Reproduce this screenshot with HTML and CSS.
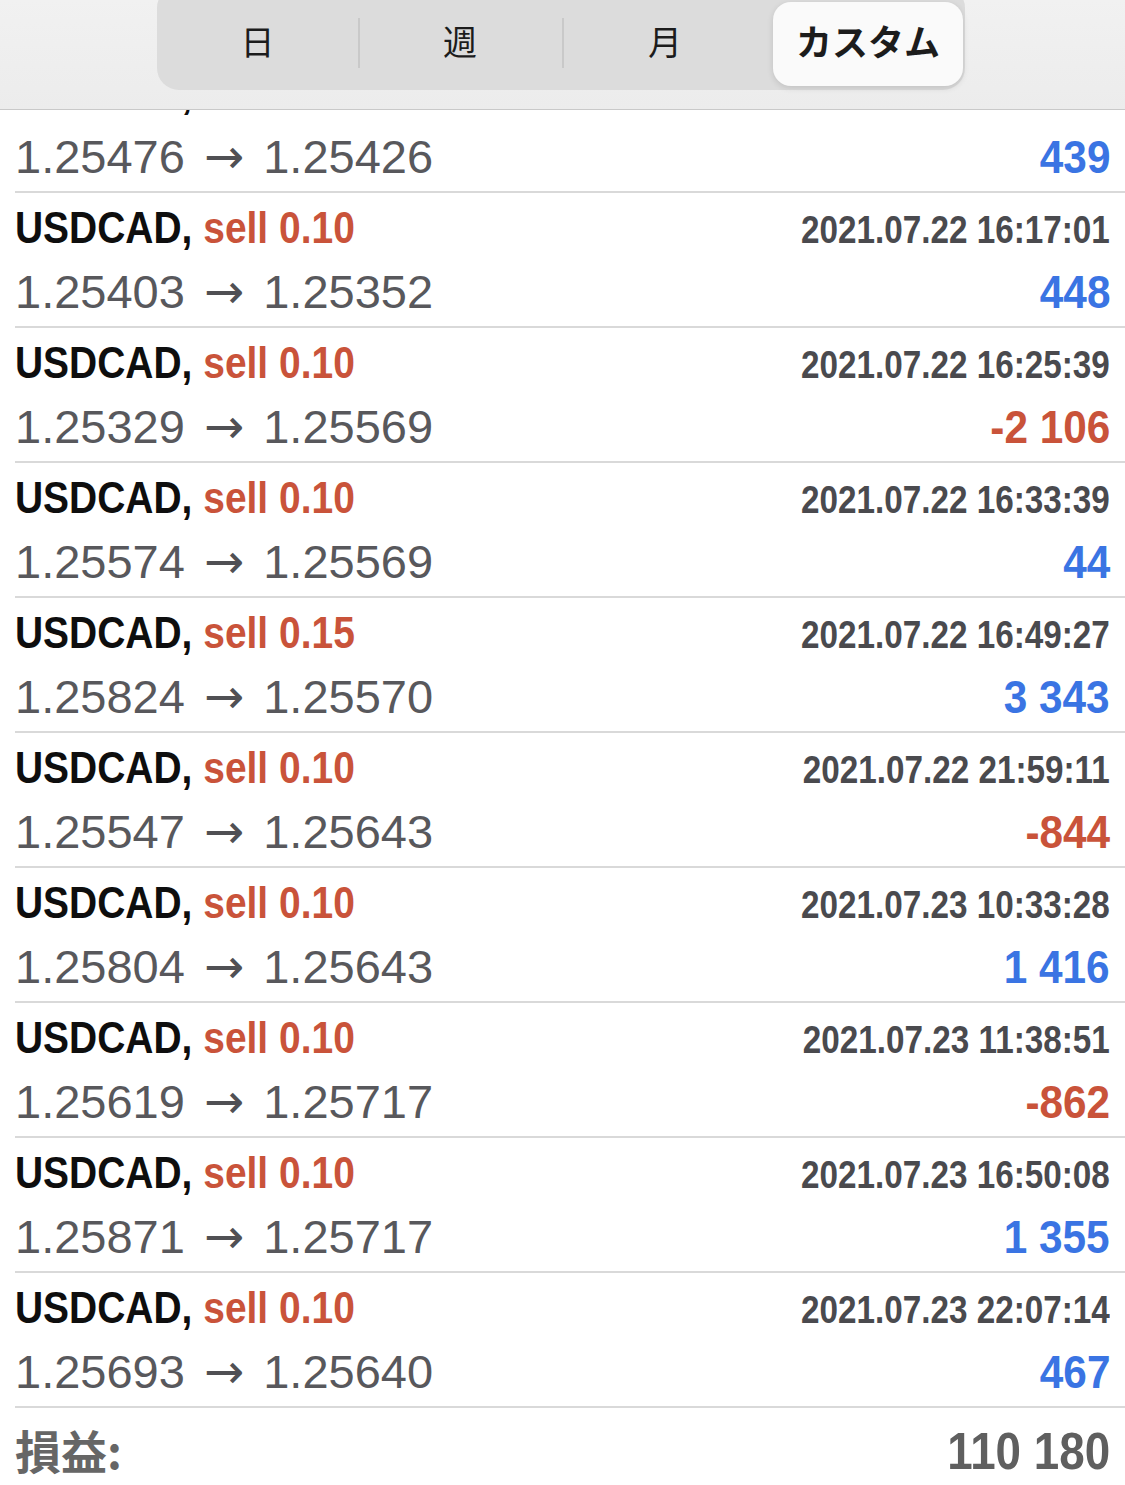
FILE: index.html
```html
<!DOCTYPE html>
<html lang="ja">
<head>
<meta charset="utf-8">
<title>履歴</title>
<link rel="stylesheet" href="styles.css">
</head>
<body>
<header class="topbar">
  <div class="segmented">
    <div class="seg">日</div>
    <div class="seg sep">週</div>
    <div class="seg sep">月</div>
    <div class="seg active">カスタム</div>
  </div>
</header>
<main class="list">
  <div class="row">
    <div class="line1"><span class="title">USDCAD, <span class="sell">sell 0.10</span></span></div>
    <div class="line2"><span class="price">1.25476 <span class="arrow">→</span> 1.25426</span><span class="profit pos">439</span></div>
  </div>
  <div class="row">
    <div class="line1"><span class="title">USDCAD, <span class="sell">sell 0.10</span></span><span class="date">2021.07.22 16:17:01</span></div>
    <div class="line2"><span class="price">1.25403 <span class="arrow">→</span> 1.25352</span><span class="profit pos">448</span></div>
  </div>
  <div class="row">
    <div class="line1"><span class="title">USDCAD, <span class="sell">sell 0.10</span></span><span class="date">2021.07.22 16:25:39</span></div>
    <div class="line2"><span class="price">1.25329 <span class="arrow">→</span> 1.25569</span><span class="profit neg">-2 106</span></div>
  </div>
  <div class="row">
    <div class="line1"><span class="title">USDCAD, <span class="sell">sell 0.10</span></span><span class="date">2021.07.22 16:33:39</span></div>
    <div class="line2"><span class="price">1.25574 <span class="arrow">→</span> 1.25569</span><span class="profit pos">44</span></div>
  </div>
  <div class="row">
    <div class="line1"><span class="title">USDCAD, <span class="sell">sell 0.15</span></span><span class="date">2021.07.22 16:49:27</span></div>
    <div class="line2"><span class="price">1.25824 <span class="arrow">→</span> 1.25570</span><span class="profit pos">3 343</span></div>
  </div>
  <div class="row">
    <div class="line1"><span class="title">USDCAD, <span class="sell">sell 0.10</span></span><span class="date">2021.07.22 21:59:11</span></div>
    <div class="line2"><span class="price">1.25547 <span class="arrow">→</span> 1.25643</span><span class="profit neg">-844</span></div>
  </div>
  <div class="row">
    <div class="line1"><span class="title">USDCAD, <span class="sell">sell 0.10</span></span><span class="date">2021.07.23 10:33:28</span></div>
    <div class="line2"><span class="price">1.25804 <span class="arrow">→</span> 1.25643</span><span class="profit pos">1 416</span></div>
  </div>
  <div class="row">
    <div class="line1"><span class="title">USDCAD, <span class="sell">sell 0.10</span></span><span class="date">2021.07.23 11:38:51</span></div>
    <div class="line2"><span class="price">1.25619 <span class="arrow">→</span> 1.25717</span><span class="profit neg">-862</span></div>
  </div>
  <div class="row">
    <div class="line1"><span class="title">USDCAD, <span class="sell">sell 0.10</span></span><span class="date">2021.07.23 16:50:08</span></div>
    <div class="line2"><span class="price">1.25871 <span class="arrow">→</span> 1.25717</span><span class="profit pos">1 355</span></div>
  </div>
  <div class="row">
    <div class="line1"><span class="title">USDCAD, <span class="sell">sell 0.10</span></span><span class="date">2021.07.23 22:07:14</span></div>
    <div class="line2"><span class="price">1.25693 <span class="arrow">→</span> 1.25640</span><span class="profit pos">467</span></div>
  </div>
  <div class="total">
    <span class="total-label">損益:</span>
    <span class="total-value">110 180</span>
  </div>
</main>
</body>
</html>
```
FILE: styles.css
```css
* { box-sizing: border-box; }
html, body {
  margin: 0;
  padding: 0;
  background: #ffffff;
}
body {
  font-family: "Liberation Sans", "Noto Sans CJK JP", sans-serif;
  color: #111;
  overflow: hidden;
  height: 1485px;
}

/* top bar overlays the scrolled list */
.topbar {
  position: fixed;
  top: 0;
  left: 0;
  right: 0;
  height: 110px;
  background: linear-gradient(#f1f1f1, #ececec);
  border-bottom: 1px solid #c9c9c9;
  display: flex;
  padding-left: 157px;
  z-index: 10;
}
.segmented {
  margin-top: -14px;
  width: 808px;
  height: 104px;
  background: #dcdcdc;
  border-radius: 22px;
  padding: 16px 2px 4px 0;
  display: grid;
  grid-template-columns: 201px 204px 206px 1fr;
}
.seg {
  position: relative;
  display: flex;
  align-items: center;
  justify-content: center;
  font-family: "Noto Sans CJK JP", sans-serif;
  font-size: 34px;
  color: #1c1c1c;
  font-weight: 400;
  padding-bottom: 8px;
}
.seg.sep::before {
  content: "";
  position: absolute;
  left: 0;
  top: 16px;
  bottom: 18px;
  width: 2px;
  background: #c9c9c9;
}
.seg.active {
  margin-left: 5px;
  background: #fafafa;
  border-radius: 18px;
  box-shadow: 0 2px 6px rgba(0,0,0,0.12);
  font-weight: 700;
  font-size: 36px;
}

.list {
  padding-top: 58px;
  padding-left: 15px;
}
.row {
  height: 135px;
  border-bottom: 2px solid #d9d9d9;
  padding-top: 10px;
  padding-right: 15px;
}
.line1, .line2 {
  display: flex;
  justify-content: space-between;
  align-items: baseline;
}
.line1 { height: 50px; line-height: 50px; }
.line2 { height: 64px; line-height: 64px; padding-top: 6px; }

.title, .date, .profit, .total-value, .price {
  display: inline-block;
}
.title {
  font-family: "Liberation Sans", sans-serif;
  font-weight: 700;
  font-size: 44px;
  color: #0e0e0e;
  transform: scaleX(0.885);
  transform-origin: left center;
}
.sell { color: #c9533a; }
.date {
  font-family: "Liberation Sans", sans-serif;
  font-weight: 700;
  font-size: 38px;
  color: #4a4a4e;
  transform: scaleX(0.875);
  transform-origin: right center;
}
.price {
  font-family: "Liberation Sans", sans-serif;
  font-size: 47px;
  color: #58585c;
}
.arrow {
  font-family: "DejaVu Sans", sans-serif;
  font-size: 48px;
  color: #505054;
  margin: 0 6px;
}
.profit {
  font-family: "Liberation Sans", sans-serif;
  font-weight: 700;
  font-size: 47px;
  transform: scaleX(0.9);
  transform-origin: right center;
}
.pos { color: #3a74e3; }
.neg { color: #c9533a; }

.total {
  display: flex;
  justify-content: space-between;
  align-items: baseline;
  padding-top: 15px;
  padding-right: 15px;
  line-height: 52px;
}
.total-label {
  font-family: "Noto Sans CJK JP", sans-serif;
  font-weight: 700;
  font-size: 46px;
  color: #666;
}
.total-value {
  font-family: "Liberation Sans", sans-serif;
  font-weight: 700;
  font-size: 52px;
  color: #5f5f5f;
  transform: scaleX(0.88);
  transform-origin: right center;
}
```
